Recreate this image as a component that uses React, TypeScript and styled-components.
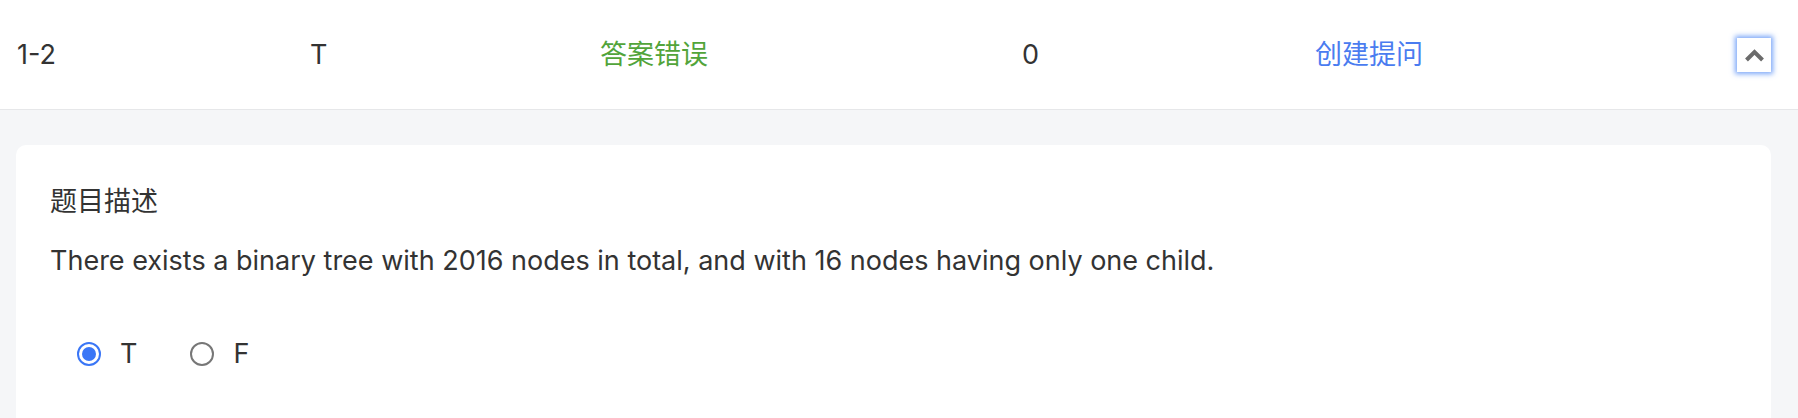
import React from "react";
import styled, { createGlobalStyle } from "styled-components";

const GlobalStyle = createGlobalStyle`
  html, body {
    margin: 0;
    padding: 0;
    background: #f5f6f8;
  }
  body {
    font-family: "Inter", "Noto Sans CJK SC", sans-serif;
    color: #333333;
    overflow: hidden;
  }
  * { box-sizing: border-box; }
`;

const Page = styled.div`
  width: 1798px;
  min-height: 418px;
  background: #f5f6f8;
`;

const HeaderRow = styled.div`
  display: grid;
  grid-template-columns: 293px 290px 422px 293px 1fr auto;
  align-items: center;
  height: 110px;
  padding: 0 27px 0 17px;
  background: #ffffff;
  border-bottom: 1px solid #e6e7e9;
  font-size: 27px;
  line-height: 40px;
`;

type Tone = "default" | "success" | "link";

const toneColor: Record<Tone, string> = {
  default: "#333333",
  success: "#52a43a",
  link: "#4a7cf0",
};

const Cell = styled.div<{ $tone?: Tone }>`
  color: ${(p) => toneColor[p.$tone ?? "default"]};
  white-space: nowrap;
  cursor: ${(p) => (p.$tone === "link" ? "pointer" : "default")};
`;

const ToggleButton = styled.button`
  grid-column: 6;
  width: 34px;
  height: 34px;
  padding: 0;
  margin: 0;
  border: none;
  background: #ffffff;
  display: flex;
  align-items: center;
  justify-content: center;
  box-shadow: 0 0 5px 2px rgba(66, 128, 245, 0.7);
  cursor: pointer;
`;

const Card = styled.section`
  margin: 35px 27px 0 16px;
  min-height: 300px;
  background: #ffffff;
  border-radius: 10px;
  padding: 37px 34px 0 34px;
`;

const Title = styled.h3`
  margin: 0;
  font-size: 27px;
  font-weight: 400;
  line-height: 40px;
  color: #333333;
`;

const Description = styled.p`
  margin: 19px 0 0 0;
  font-size: 27px;
  line-height: 40px;
  color: #333333;
`;

const RadioGroup = styled.div`
  display: flex;
  align-items: center;
  gap: 53px;
  margin-top: 53px;
  padding-left: 27px;
  height: 40px;
`;

const Option = styled.label`
  display: flex;
  align-items: center;
  gap: 19px;
  font-size: 27px;
  line-height: 40px;
  color: #333333;
  cursor: pointer;
`;

const RadioMark = styled.span<{ $checked: boolean }>`
  width: 24px;
  height: 24px;
  border-radius: 50%;
  border: 2px solid ${(p) => (p.$checked ? "#3a76f6" : "#777777")};
  display: inline-flex;
  align-items: center;
  justify-content: center;
  background: #ffffff;

  &::after {
    content: "";
    width: 14px;
    height: 14px;
    border-radius: 50%;
    background: ${(p) => (p.$checked ? "#3a76f6" : "transparent")};
  }
`;

const ChevronUp = () => (
  <svg width="21" height="14" viewBox="0 0 21 14" aria-hidden="true">
    <polyline
      points="2.5,12 10.5,4 18.5,12"
      fill="none"
      stroke="#6b6b6b"
      strokeWidth="4"
      strokeLinejoin="miter"
    />
  </svg>
);

const options = [
  { label: "T", checked: true },
  { label: "F", checked: false },
];

export default function App() {
  return (
    <Page>
      <GlobalStyle />
      <HeaderRow>
        <Cell>1-2</Cell>
        <Cell>T</Cell>
        <Cell $tone="success">答案错误</Cell>
        <Cell>0</Cell>
        <Cell $tone="link">创建提问</Cell>
        <ToggleButton aria-label="收起">
          <ChevronUp />
        </ToggleButton>
      </HeaderRow>
      <Card>
        <Title>题目描述</Title>
        <Description>
          There exists a binary tree with 2016 nodes in total, and with 16 nodes having only one child.
        </Description>
        <RadioGroup>
          {options.map((o) => (
            <Option key={o.label}>
              <RadioMark $checked={o.checked} />
              {o.label}
            </Option>
          ))}
        </RadioGroup>
      </Card>
    </Page>
  );
}
